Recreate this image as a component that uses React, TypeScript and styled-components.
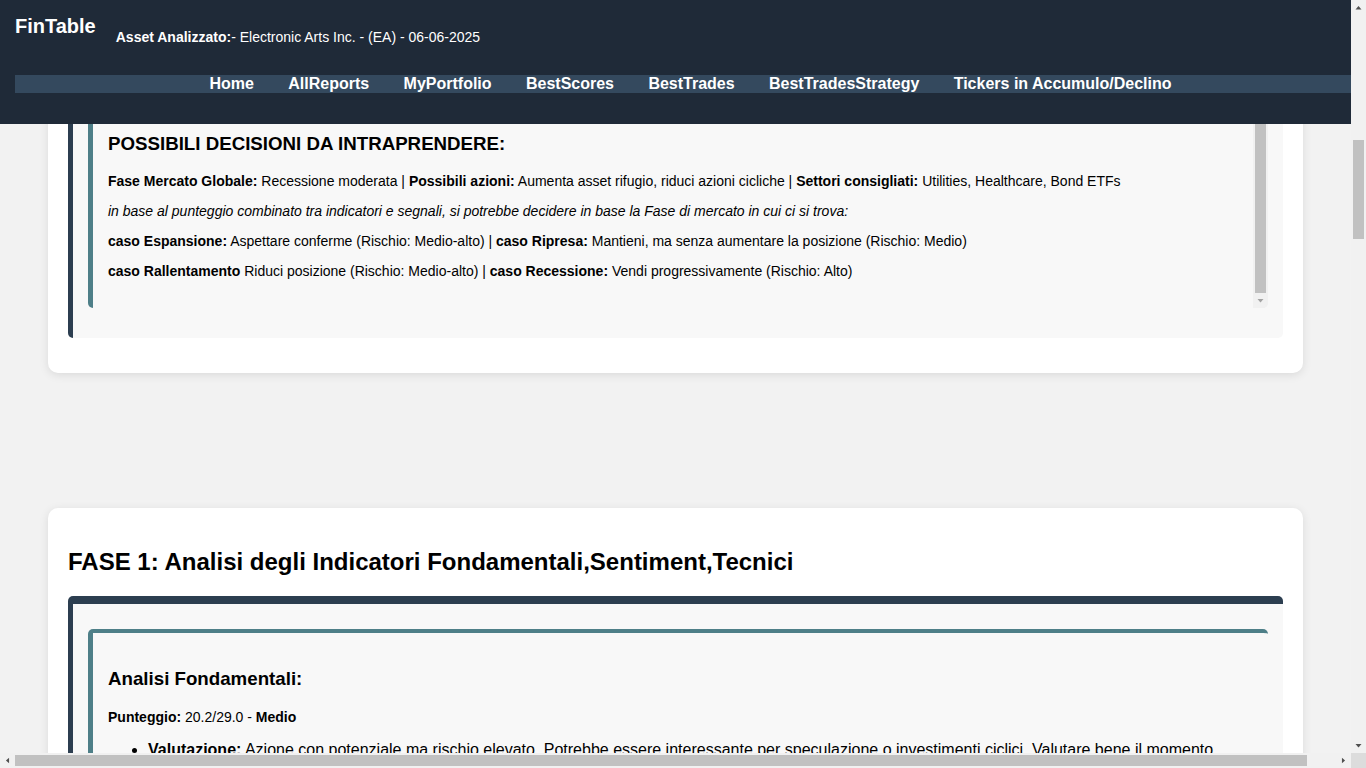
import React from "react";
import styled, { createGlobalStyle } from "styled-components";

const GlobalStyle = createGlobalStyle`
  body {
    margin: 0;
    background: #f2f2f2;
    font-family: "Liberation Sans", Arial, Helvetica, sans-serif;
    color: #000;
  }
`;

/* ---------- header ---------- */

const Header = styled.header`
  position: fixed;
  top: 0;
  left: 0;
  width: calc(100% - 15px);
  padding: 15px 15px 31px;
  background: #1f2a38;
  color: #fff;
  z-index: 10;
`;

const TopRow = styled.div`
  display: flex;
  align-items: flex-start;
  gap: 20px;
`;

const Brand = styled.h1`
  margin: 0;
  font-size: 20px;
  line-height: 23px;
  font-weight: bold;
`;

const AssetInfo = styled.div`
  padding-top: 14px;
  font-size: 14px;
  line-height: 16px;
`;

const Nav = styled.nav`
  margin-top: 30px;
  height: 18px;
  background: #34495e;
  display: flex;
  justify-content: center;
  align-items: flex-start;
`;

const NavLink = styled.a`
  padding: 0 17.2px;
  color: #fff;
  font-size: 16px;
  line-height: 18px;
  font-weight: bold;
  text-decoration: none;
  white-space: nowrap;
`;

/* ---------- content ---------- */

const Main = styled.main`
  padding: 41px 63px 40px 48px;
`;

const Card = styled.section`
  background: #fff;
  border-radius: 10px;
  padding: 20px;
  box-shadow: 0 2px 10px rgba(0, 0, 0, 0.1);
  & + & {
    margin-top: 135px;
  }
`;

const SectionTitle = styled.h2`
  font-size: 24px;
  margin: 20px 0;
`;

const OuterBox = styled.div`
  background: #f8f8f8;
  border-left: 5px solid #2c3e50;
  border-top: 8px solid #2c3e50;
  border-radius: 5px;
  padding: 15px;
  margin-bottom: 15px;
`;

const InnerBox = styled.div<{ $scrollable?: boolean }>`
  position: relative;
  background: #f8f8f8;
  border-left: 5px solid #4e7f88;
  border-top: 4px solid #4e7f88;
  border-radius: 5px;
  padding: 16px ${(p) => (p.$scrollable ? "30px" : "15px")} 15px 15px;
  margin: 10px 0 15px;
  overflow: hidden;
`;

const BoxTitle = styled.h3`
  font-size: 18.72px;
  margin: 18.72px 0;
`;

const Para = styled.p`
  font-size: 14px;
  margin: 14px 0;
`;

const List = styled.ul`
  margin: 16px 0;
  padding-left: 40px;
`;

const Item = styled.li`
  font-size: 16px;
`;

/* ---------- scrollbars (drawn over the page) ---------- */

const BoxScrollbar = styled.div`
  position: absolute;
  top: 0;
  right: 0;
  bottom: 0;
  width: 15px;
  background: #f1f1f1;
  display: flex;
  flex-direction: column;
`;

const VTrack = styled.div`
  flex: 1;
  position: relative;
`;

const VThumb = styled.div<{ $top: number; $height: number | string }>`
  position: absolute;
  left: 2px;
  right: 2px;
  top: ${(p) => p.$top}px;
  height: ${(p) => (typeof p.$height === "number" ? `${p.$height}px` : p.$height)};
  background: #c1c1c1;
`;

const ArrowButton = styled.div`
  flex: 0 0 15px;
  width: 15px;
  height: 15px;
  display: flex;
  align-items: center;
  justify-content: center;
  background: #f1f1f1;
`;

const PageVScroll = styled.div`
  position: fixed;
  top: 0;
  right: 0;
  bottom: 15px;
  width: 15px;
  background: #f1f1f1;
  display: flex;
  flex-direction: column;
  z-index: 20;
`;

const PageHScroll = styled.div`
  position: fixed;
  left: 0;
  right: 15px;
  bottom: 0;
  height: 15px;
  background: #f1f1f1;
  display: flex;
  z-index: 20;
`;

const HTrack = styled.div`
  flex: 1;
  display: flex;
  align-items: center;
`;

const HThumb = styled.div<{ $ratio: number }>`
  height: 11px;
  width: ${(p) => p.$ratio * 100}%;
  background: #c1c1c1;
`;

const Corner = styled.div`
  position: fixed;
  right: 0;
  bottom: 0;
  width: 15px;
  height: 15px;
  background: #dcdcdc;
  z-index: 20;
`;

type Dir = "up" | "down" | "left" | "right";

const arrowPoints: Record<Dir, string> = {
  up: "0.5,4.5 3.5,1 6.5,4.5",
  down: "0.5,1 6.5,1 3.5,4.5",
  left: "4.5,0.5 4.5,6.5 1,3.5",
  right: "1,0.5 1,6.5 4.5,3.5",
};

function Arrow({ dir, color = "#505050" }: { dir: Dir; color?: string }) {
  const vertical = dir === "up" || dir === "down";
  return (
    <ArrowButton>
      <svg
        width={vertical ? 7 : 5}
        height={vertical ? 5 : 7}
        viewBox={vertical ? "0 0 7 5" : "0 0 5.5 7"}
      >
        <polygon points={arrowPoints[dir]} fill={color} />
      </svg>
    </ArrowButton>
  );
}

const links = [
  "Home",
  "AllReports",
  "MyPortfolio",
  "BestScores",
  "BestTrades",
  "BestTradesStrategy",
  "Tickers in Accumulo/Declino",
];

export default function App() {
  return (
    <>
      <GlobalStyle />
      <Header>
        <TopRow>
          <Brand>FinTable</Brand>
          <AssetInfo>
            <b>Asset Analizzato:</b>- Electronic Arts Inc. - (EA) - 06-06-2025
          </AssetInfo>
        </TopRow>
        <Nav>
          {links.map((l) => (
            <NavLink key={l} href="#">
              {l}
            </NavLink>
          ))}
        </Nav>
      </Header>

      <Main>
        <Card>
          <OuterBox>
            <InnerBox $scrollable>
              <BoxTitle>POSSIBILI DECISIONI DA INTRAPRENDERE:</BoxTitle>
              <Para>
                <b>Fase Mercato Globale:</b> Recessione moderata | <b>Possibili azioni:</b> Aumenta
                asset rifugio, riduci azioni cicliche | <b>Settori consigliati:</b> Utilities,
                Healthcare, Bond ETFs
              </Para>
              <Para>
                <i>
                  in base al punteggio combinato tra indicatori e segnali, si potrebbe decidere in
                  base la Fase di mercato in cui ci si trova:
                </i>
              </Para>
              <Para>
                <b>caso Espansione:</b> Aspettare conferme (Rischio: Medio-alto) |{" "}
                <b>caso Ripresa:</b> Mantieni, ma senza aumentare la posizione (Rischio: Medio)
              </Para>
              <Para>
                <b>caso Rallentamento</b> Riduci posizione (Rischio: Medio-alto) |{" "}
                <b>caso Recessione:</b> Vendi progressivamente (Rischio: Alto)
              </Para>
              <BoxScrollbar>
                <VTrack>
                  <VThumb $top={0} $height="100%" />
                </VTrack>
                <Arrow dir="down" color="#a3a3a3" />
              </BoxScrollbar>
            </InnerBox>
          </OuterBox>
        </Card>

        <Card>
          <SectionTitle>FASE 1: Analisi degli Indicatori Fondamentali,Sentiment,Tecnici</SectionTitle>
          <OuterBox>
            <InnerBox>
              <BoxTitle>Analisi Fondamentali:</BoxTitle>
              <Para>
                <b>Punteggio:</b> 20.2/29.0 - <b>Medio</b>
              </Para>
              <List>
                <Item>
                  <b>Valutazione:</b> Azione con potenziale ma rischio elevato. Potrebbe essere
                  interessante per speculazione o investimenti ciclici. Valutare bene il momento.
                </Item>
              </List>
            </InnerBox>
          </OuterBox>
        </Card>
      </Main>

      <PageVScroll>
        <Arrow dir="up" />
        <VTrack>
          <VThumb $top={125} $height={99} />
        </VTrack>
        <Arrow dir="down" />
      </PageVScroll>
      <PageHScroll>
        <Arrow dir="left" />
        <HTrack>
          <HThumb $ratio={0.978} />
        </HTrack>
        <Arrow dir="right" />
      </PageHScroll>
      <Corner />
    </>
  );
}
